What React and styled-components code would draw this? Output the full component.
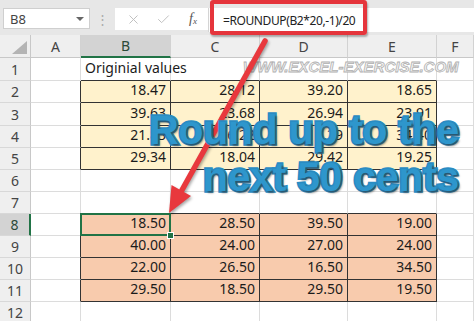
import React from 'react';
import styled, { createGlobalStyle } from 'styled-components';
import { X, Check } from 'lucide-react';

const GlobalStyle = createGlobalStyle`
  html, body { margin: 0; padding: 0; background: #fff; }
  body { width: 474px; height: 321px; overflow: hidden; font-family: "Noto Sans", sans-serif; }
`;

const Page = styled.div`
  position: relative;
  width: 474px;
  height: 321px;
  overflow: hidden;
  background: #fff;
  display: flex;
  flex-direction: column;
`;

const TopBar = styled.div`
  flex: none;
  height: 35px;
  box-sizing: border-box;
  background: #e7e7e7;
  display: flex;
  align-items: flex-start;
  padding-top: 8px;
`;

const NameBox = styled.div`
  margin-left: 3px;
  width: 87px;
  height: 21px;
  box-sizing: border-box;
  background: #fff;
  border: 1px solid #cfcfcf;
  display: flex;
  align-items: center;
  justify-content: space-between;
  padding: 0 5px 0 6px;
  font-size: 13px;
  color: #444;
`;

const Caret = styled.span`
  width: 0;
  height: 0;
  border-left: 4px solid transparent;
  border-right: 4px solid transparent;
  border-top: 4px solid #666;
`;

const Dots = styled.div`
  width: 25px;
  height: 21px;
  display: flex;
  align-items: center;
  justify-content: center;
  color: #aaa;
  font-size: 13px;
`;

const FxBox = styled.div`
  width: 93px;
  height: 22px;
  box-sizing: border-box;
  background: #fff;
  display: flex;
  align-items: center;
  padding-left: 11px;
  gap: 15px;
  color: #bdbdbd;
`;

const Fx = styled.span`
  margin-left: 3px;
  font-family: "Liberation Serif", serif;
  font-style: italic;
  font-size: 14px;
  color: #555;
  sub { font-size: 9px; vertical-align: -1px; }
`;

const FormulaInput = styled.div`
  flex: 1;
  height: 24px;
  box-sizing: border-box;
  background: #fff;
  border-left: 1px solid #d4d4d4;
  display: flex;
  align-items: center;
  padding-left: 14px;
  font-size: 12px;
  letter-spacing: -0.4px;
  color: #222;
`;

const RedBox = styled.div`
  position: absolute;
  left: 210px;
  top: 0;
  width: 157px;
  height: 35px;
  box-sizing: border-box;
  border: 4px solid #e5353c;
  border-radius: 3px;
  box-shadow: 1px 2px 2px rgba(0, 0, 0, 0.3);
`;

const Sheet = styled.div`
  display: grid;
  grid-template-columns: 31px 50px 90px 89px 88px 89px 1fr;
  grid-template-rows: 23px 23px 22px 23px 22px 22px 22px 22px 22px 22px 22px 22px 22px;
  background: #fff;
`;

const Corner = styled.div`
  background: #efefef;
  border-right: 1px solid #c8c8c8;
  border-bottom: 1px solid #c8c8c8;
  box-sizing: border-box;
  display: flex;
  align-items: flex-end;
  justify-content: flex-end;
  padding: 0 3px 3px 0;
`;

const ColHead = styled.div`
  box-sizing: border-box;
  background: ${p => (p.$sel ? '#d3d3d3' : '#efefef')};
  border-right: 1px solid #d2d2d2;
  border-bottom: ${p => (p.$sel ? '2px solid #217346' : '1px solid #c8c8c8')};
  display: flex;
  align-items: center;
  justify-content: center;
  font-size: 14px;
  color: ${p => (p.$sel ? '#2b4a38' : '#444')};
`;

const RowHead = styled.div`
  box-sizing: border-box;
  background: ${p => (p.$sel ? '#d3d3d3' : '#efefef')};
  border-right: ${p => (p.$sel ? '2px solid #217346' : '1px solid #c8c8c8')};
  border-bottom: 1px solid #d8d8d8;
  display: flex;
  align-items: center;
  justify-content: center;
  font-size: 14px;
  color: ${p => (p.$sel ? '#2b4a38' : '#444')};
`;

const fills = { yellow: '#fff2cc', peach: '#f8cbad' };

const Cell = styled.div`
  box-sizing: border-box;
  min-width: 0;
  border-right: 1px solid ${p => (p.$rDark ? '#333' : '#dcdcdc')};
  border-bottom: 1px solid ${p => (p.$bDark ? '#333' : '#dcdcdc')};
  background: ${p => fills[p.$fill] || 'transparent'};
  display: flex;
  align-items: flex-end;
  justify-content: ${p => (p.$num ? 'flex-end' : 'flex-start')};
  padding: 0 4px 4px 4px;
  font-size: 14px;
  line-height: 16px;
  color: #1b1b1b;
  white-space: nowrap;
  ${p =>
    p.$selected &&
    `
    position: relative;
    &::before {
      content: '';
      position: absolute;
      left: -1px; top: -1px; right: -1px; bottom: -1px;
      border: 2px solid #217346;
    }
    &::after {
      content: '';
      position: absolute;
      right: -4px; bottom: -4px;
      width: 5px; height: 5px;
      background: #217346;
      border: 1px solid #fff;
    }
  `}
`;

const Watermark = styled.div`
  position: absolute;
  left: 243px;
  top: 59px;
  font-family: "Liberation Sans", Arial, sans-serif;
  font-style: italic;
  font-weight: 700;
  font-size: 15px;
  line-height: 15px;
  color: #f4f4f4;
  -webkit-text-stroke: 0.8px #b0b0b0;
  white-space: nowrap;
`;

const ArrowLayer = styled.svg`
  position: absolute;
  left: 0;
  top: 0;
  filter: drop-shadow(1px 2px 1.5px rgba(0, 0, 0, 0.35));
`;

const Banner = styled.div`
  position: absolute;
  right: 15px;
  top: 107px;
  text-align: right;
  font-family: "Liberation Sans", Arial, sans-serif;
  font-weight: 700;
  font-size: 41px;
  line-height: 47px;
  letter-spacing: -0.3px;
  color: #2e96cc;
  -webkit-text-stroke: 3.4px #2a8cc3;
  paint-order: stroke fill;
  text-shadow: 2px 2px 2px rgba(40, 40, 40, 0.55);
  white-space: nowrap;
`;

const cols = ['A', 'B', 'C', 'D', 'E', 'F'];

const original = [
  ['18.47', '28.12', '39.20', '18.65'],
  ['39.63', '23.68', '26.94', '23.91'],
  ['21.83', '26.22', '16.29', '34.40'],
  ['29.34', '18.04', '29.42', '19.25'],
];
const rounded = [
  ['18.50', '28.50', '39.50', '19.00'],
  ['40.00', '24.00', '27.00', '24.00'],
  ['22.00', '26.50', '16.50', '34.50'],
  ['29.50', '18.50', '29.50', '19.50'],
];

function cellProps(r, c) {
  const inTop = r >= 2 && r <= 5;
  const inBot = r >= 8 && r <= 11;
  const inCols = c >= 1 && c <= 4;
  const p = { $fill: null, $rDark: false, $bDark: false, $num: true, text: '' };
  if (inCols && (inTop || inBot)) {
    p.$fill = inTop ? 'yellow' : 'peach';
    p.$rDark = true;
    p.$bDark = true;
    p.text = inTop ? original[r - 2][c - 1] : rounded[r - 8][c - 1];
  }
  if (inCols && (r === 1 || r === 7)) p.$bDark = true;
  if (c === 0 && (inTop || inBot)) p.$rDark = true;
  if (r === 1 && c === 1) {
    p.text = 'Originial values';
    p.$num = false;
  }
  if (r === 8 && c === 1) p.$selected = true;
  return p;
}

export default function App() {
  const rows = Array.from({ length: 12 }, (_, i) => i + 1);
  return (
    <Page>
      <GlobalStyle />
      <TopBar>
        <NameBox>
          <span>B8</span>
          <Caret />
        </NameBox>
        <Dots>⋮</Dots>
        <FxBox>
          <X size={15} strokeWidth={1.5} />
          <Check size={15} strokeWidth={1.5} />
          <Fx>
            f<sub>x</sub>
          </Fx>
        </FxBox>
        <FormulaInput>=ROUNDUP(B2*20,-1)/20</FormulaInput>
      </TopBar>
      <Sheet>
        <Corner>
          <svg width="15" height="13" viewBox="0 0 15 13">
            <polygon points="15,0 15,13 0,13" fill="#b4b4b4" />
          </svg>
        </Corner>
        {cols.map(c => (
          <ColHead key={c} $sel={c === 'B'}>
            {c}
          </ColHead>
        ))}
        {rows.map(r => (
          <React.Fragment key={r}>
            <RowHead $sel={r === 8}>{r}</RowHead>
            {cols.map((_, c) => {
              const { text, ...p } = cellProps(r, c);
              return (
                <Cell key={c} {...p}>
                  {text}
                </Cell>
              );
            })}
          </React.Fragment>
        ))}
      </Sheet>
      <RedBox />
      <Watermark>WWW.EXCEL-EXERCISE.COM</Watermark>
      <ArrowLayer width="474" height="321" viewBox="0 0 474 321">
        <line x1="265" y1="41" x2="182" y2="190" stroke="#e8383d" strokeWidth="5.5" strokeLinecap="round" />
        <polygon points="169,213 191,196 171.5,185" fill="#e8383d" />
      </ArrowLayer>
      <Banner>
        Round up to the
        <br />
        next 50 cents
      </Banner>
    </Page>
  );
}
